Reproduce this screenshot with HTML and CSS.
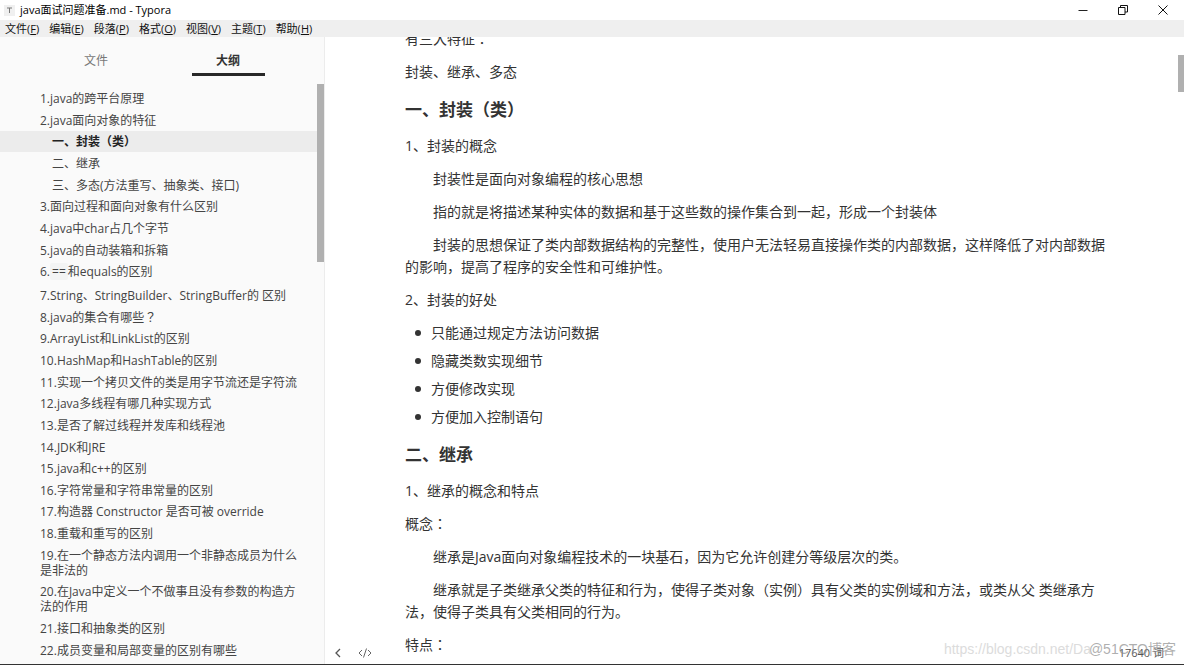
FILE: index.html
```html
<!DOCTYPE html>
<html lang="zh-CN">
<head>
<meta charset="utf-8">
<title>java面试问题准备.md - Typora</title>
<link rel="stylesheet" href="styles.css">
</head>
<body>
<div class="app">
  <header class="titlebar">
    <svg class="app-icon" width="11" height="11" viewBox="0 0 11 11" aria-hidden="true"><rect width="11" height="11" fill="#f0f0f0"/><path d="M3 3h5M5.500 3v5" stroke="#777" stroke-width="1" fill="none"/></svg>
    <h1 class="title">java面试问题准备.md - Typora</h1>
    <div class="window-buttons">
      <button class="window-button" aria-label="最小化"><svg width="10" height="10" viewBox="0 0 10 10"><path d="M.5 5.500h9" stroke="#222" fill="none"/></svg></button>
      <button class="window-button" aria-label="还原"><svg width="10" height="10" viewBox="0 0 10 10"><path d="M.5 2.500h6.500v7H.5zM2.500 2.500V.5h7v6.500H7" stroke="#111" fill="none"/></svg></button>
      <button class="window-button" aria-label="关闭"><svg width="10" height="10" viewBox="0 0 10 10"><path d="M.5.5l9 9M9.500.5l-9 9" stroke="#111" fill="none"/></svg></button>
    </div>
  </header>
  <nav class="menubar">
    <button class="menu">文件(<u>F</u>)</button>
    <button class="menu">编辑(<u>E</u>)</button>
    <button class="menu">段落(<u>P</u>)</button>
    <button class="menu">格式(<u>O</u>)</button>
    <button class="menu">视图(<u>V</u>)</button>
    <button class="menu">主题(<u>T</u>)</button>
    <button class="menu">帮助(<u>H</u>)</button>
  </nav>
  <div class="workspace">
    <aside class="sidebar">
      <div class="tabs">
        <button class="tab">文件</button>
        <button class="tab tab-active">大纲</button>
      </div>
      <nav class="outline">
        <a class="entry" href="#">1.java的跨平台原理</a>
        <a class="entry" href="#">2.java面向对象的特征</a>
        <a class="entry entry-sub entry-active" href="#">一、封装（类）</a>
        <a class="entry entry-sub" href="#">二、继承</a>
        <a class="entry entry-sub" href="#">三、多态(方法重写、抽象类、接口)</a>
        <a class="entry" href="#">3.面向过程和面向对象有什么区别</a>
        <a class="entry" href="#">4.java中char占几个字节</a>
        <a class="entry" href="#">5.java的自动装箱和拆箱</a>
        <a class="entry entry-code" href="#">6.<code class="code">==</code>和equals的区别</a>
        <a class="entry" href="#">7.String、StringBuilder、StringBuffer的 区别</a>
        <a class="entry" href="#">8.java的集合有哪些<span class="mark" lang="ja">？</span></a>
        <a class="entry" href="#">9.ArrayList和LinkList的区别</a>
        <a class="entry" href="#">10.HashMap和HashTable的区别</a>
        <a class="entry" href="#">11.实现一个拷贝文件的类是用字节流还是字符流</a>
        <a class="entry" href="#">12.java多线程有哪几种实现方式</a>
        <a class="entry" href="#">13.是否了解过线程并发库和线程池</a>
        <a class="entry" href="#">14.JDK和JRE</a>
        <a class="entry" href="#">15.java和c++的区别</a>
        <a class="entry" href="#">16.字符常量和字符串常量的区别</a>
        <a class="entry" href="#">17.构造器 Constructor 是否可被 override</a>
        <a class="entry" href="#">18.重载和重写的区别</a>
        <a class="entry" href="#">19.在一个静态方法内调用一个非静态成员为什么是非法的</a>
        <a class="entry" href="#">20.在Java中定义一个不做事且没有参数的构造方法的作用</a>
        <a class="entry" href="#">21.接口和抽象类的区别</a>
        <a class="entry" href="#">22.成员变量和局部变量的区别有哪些</a>
      </nav>
      <div class="scroll-thumb sidebar-thumb"></div>
    </aside>
    <main class="editor">
      <article class="document">
        <p>有三大特征<span class="mark" lang="ja">：</span></p>
        <p>封装、继承、多态</p>
        <h2>一、封装（类）</h2>
        <p>1、封装的概念</p>
        <p class="indent">封装性是面向对象编程的核心思想</p>
        <p class="indent">指的就是将描述某种实体的数据和基于这些数的操作集合到一起，形成一个封装体</p>
        <p class="indent">封装的思想保证了类内部数据结构的完整性，使用户无法轻易直接操作类的内部数据，这样降低了对内部数据的影响，提高了程序的安全性和可维护性。</p>
        <p>2、封装的好处</p>
        <ul>
          <li>只能通过规定方法访问数据</li>
          <li>隐藏类数实现细节</li>
          <li>方便修改实现</li>
          <li>方便加入控制语句</li>
        </ul>
        <h2>二、继承</h2>
        <p>1、继承的概念和特点</p>
        <p>概念<span class="mark" lang="ja">：</span></p>
        <p class="indent">继承是Java面向对象编程技术的一块基石，因为它允许创建分等级层次的类。</p>
        <p class="indent">继承就是子类继承父类的特征和行为，使得子类对象（实例）具有父类的实例域和方法，或类从父 类继承方法，使得子类具有父类相同的行为。</p>
        <p>特点<span class="mark" lang="ja">：</span></p>
      </article>
      <div class="scroll-thumb editor-thumb"></div>
      <footer class="statusbar">
        <button class="status-button" aria-label="隐藏侧边栏"><svg width="8" height="10" viewBox="0 0 8 10"><path d="M6 1L2 5l4 4" stroke="#555" stroke-width="1.300" fill="none"/></svg></button>
        <button class="status-button" aria-label="源代码模式"><svg width="14" height="10" viewBox="0 0 14 10"><path d="M4 2L1 5l3 3M10 2l3 3-3 3M8.500.5l-3 9" stroke="#666" fill="none"/></svg></button>
        <span class="word-count">17640 词</span>
      </footer>
      <span class="watermark watermark-url">https://blog.csdn.net/Da</span>
      <span class="watermark watermark-site">@51CTO博客</span>
    </main>
  </div>
  <div class="bottom-edge"></div>
</div>
</body>
</html>
```
FILE: styles.css
```css
* {
  box-sizing: border-box;
}

body {
  margin: 0;
  font-family: "Open Sans", "Noto Sans CJK SC", sans-serif;
  color: #333;
  background: #fff;
}

button {
  margin: 0;
  padding: 0;
  border: 0;
  background: none;
  font: inherit;
  color: inherit;
}

.app {
  display: flex;
  flex-direction: column;
  height: 100vh;
  overflow: hidden;
}

.titlebar {
  display: flex;
  align-items: center;
  gap: 5px;
  height: 20px;
  padding-left: 4px;
  color: #000;
}

.title {
  margin: 0;
  font-size: 11px;
  line-height: 20px;
  font-weight: 400;
}

.window-buttons {
  display: flex;
  height: 18px;
  margin-left: auto;
  padding-right: 1px;
}

.window-button {
  display: flex;
  align-items: center;
  justify-content: center;
  width: 40px;
}

.menubar {
  display: flex;
  gap: 10px;
  height: 17px;
  padding-left: 5px;
  background: #efefef;
  color: #111;
  font-size: 11px;
  line-height: 17px;
}

.workspace {
  display: flex;
  flex: 1;
  min-height: 0;
}

.sidebar {
  position: relative;
  display: flex;
  flex-direction: column;
  flex: none;
  width: 325px;
  padding-bottom: 3px;
  border-right: 1px solid #ececec;
  background: #fafafa;
}

.tabs {
  display: flex;
  height: 51px;
  padding: 0 30px;
}

.tab {
  display: flex;
  flex-direction: column;
  align-items: center;
  flex: 1;
  height: 39px;
  padding-top: 14px;
  font-size: 12px;
  line-height: 20px;
  color: #777;
}

.tab-active {
  font-weight: 700;
  color: #333;
}

.tab-active::after {
  content: "";
  width: 73px;
  height: 3px;
  margin-top: auto;
  background: #282828;
}

.outline {
  display: flex;
  flex-direction: column;
  justify-content: space-between;
  flex: 1;
  font-size: 12px;
  line-height: 15px;
}

.entry {
  padding: 3px 24px 3px 40px;
  color: #444;
  text-decoration: none;
}

.entry-sub {
  padding-left: 52px;
}

.entry-code {
  padding-bottom: 5px;
}

.entry-active {
  background: #ececec;
  color: #222;
  font-weight: 700;
}

.code {
  padding: 0 2px;
  border-radius: 2px;
  background: #f3f4f4;
  font: inherit;
}

.mark {
  font-family: "Noto Sans CJK JP", sans-serif;
  line-height: 1;
}

.scroll-thumb {
  position: absolute;
  right: 0;
  background: #b0b0b0;
}

.sidebar-thumb {
  top: 47px;
  width: 7px;
  height: 178px;
}

.editor-thumb {
  top: 18px;
  width: 6px;
  height: 37px;
}

.editor {
  position: relative;
  flex: 1;
  overflow: hidden;
}

.document {
  display: flex;
  flex-direction: column;
  gap: 11px;
  margin-top: -9px;
  padding: 0 78px 0 80px;
  font-size: 14px;
  line-height: 22px;
}

.document p,
.document h2,
.document ul {
  margin: 0;
}

.document h2 {
  padding-top: 2px;
  font-size: 17px;
  line-height: 28px;
}

.document .indent {
  text-indent: 2em;
}

.document ul {
  display: flex;
  flex-direction: column;
  gap: 6px;
  padding-left: 10px;
  list-style: none;
}

.document li {
  display: flex;
  align-items: center;
  gap: 10px;
}

.document li::before {
  content: "";
  width: 6px;
  height: 6px;
  border-radius: 50%;
  background: #333;
}

.statusbar {
  position: absolute;
  right: 0;
  bottom: 0;
  left: 0;
  display: flex;
  align-items: center;
  gap: 16px;
  height: 22px;
  padding: 0 20px 0 9px;
}

.status-button {
  display: flex;
}

.word-count {
  margin-left: auto;
  font-size: 11px;
  line-height: 22px;
  color: #555;
}

.watermark {
  position: absolute;
  bottom: 5px;
  line-height: 20px;
  white-space: nowrap;
}

.watermark-url {
  right: 93px;
  font-family: "Liberation Sans", sans-serif;
  font-size: 14px;
  color: #dcdcdc;
}

.watermark-site {
  right: 8px;
  font-family: "Liberation Sans", "Noto Sans CJK SC", sans-serif;
  font-size: 14px;
  color: rgba(140, 140, 140, 0.7);
}

.bottom-edge {
  height: 1px;
  background: #333;
}
```
